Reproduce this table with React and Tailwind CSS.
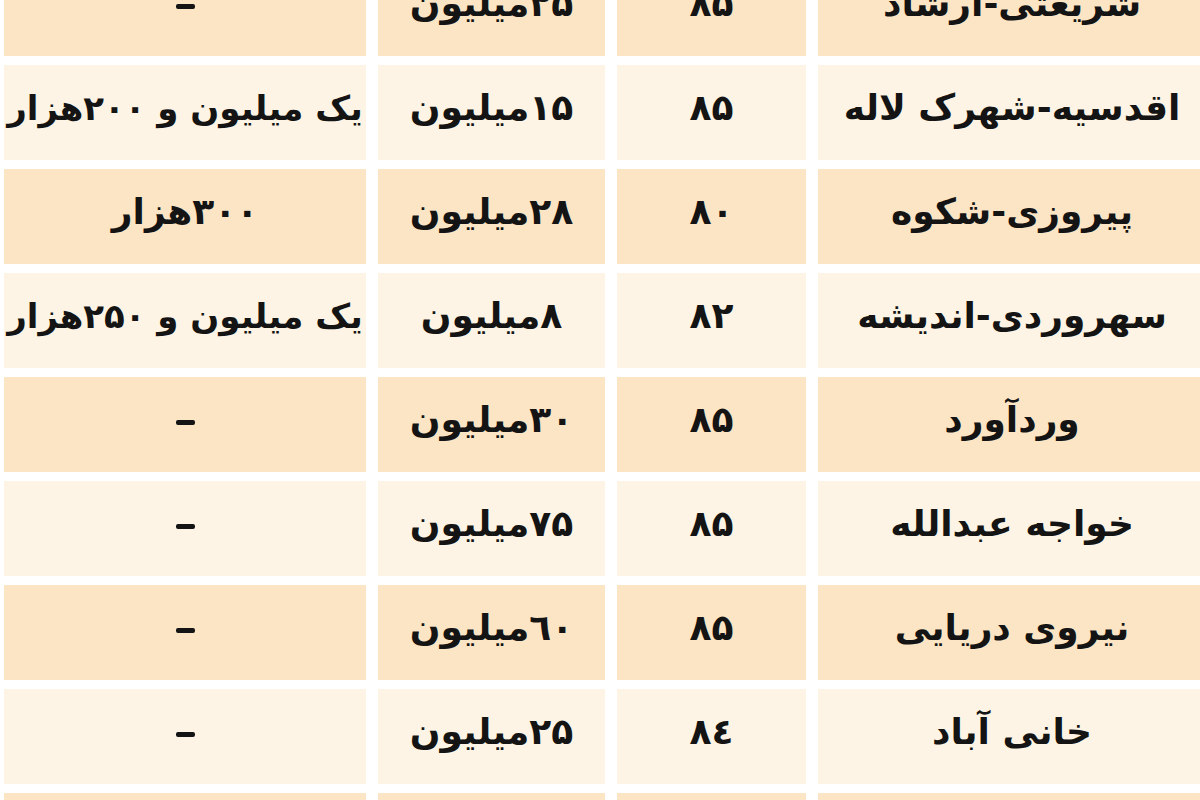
import React from "react";

const rows = [
  ["شریعتی-ارشاد", "۸۵", "۲۵میلیون", "–"],
  ["اقدسیه-شهرک لاله", "۸۵", "۱۵میلیون", "یک میلیون و ۲۰۰هزار"],
  ["پیروزی-شکوه", "۸۰", "۲۸میلیون", "۳۰۰هزار"],
  ["سهروردی-اندیشه", "۸۲", "۸میلیون", "یک میلیون و ۲۵۰هزار"],
  ["وردآورد", "۸۵", "۳۰میلیون", "–"],
  ["خواجه عبدالله", "۸۵", "۷۵میلیون", "–"],
  ["نیروی دریایی", "۸۵", "٦۰میلیون", "–"],
  ["خانی آباد", "۸٤", "۲۵میلیون", "–"],
  ["", "", "", ""],
];

export default function App() {
  return (
    <div className="w-[1200px] h-[800px] overflow-hidden bg-white">
      <div
        dir="rtl"
        className="-mt-[39px] -mr-[6px] flex flex-col gap-[9px] text-[#141414] font-bold"
        style={{ fontFamily: '"DejaVu Sans", sans-serif' }}
      >
        {rows.map((r, i) => (
          <div
            key={i}
            className="grid grid-cols-[388px_189px_227px_362px] gap-x-[12px] h-[95px]"
          >
            {r.map((c, j) => (
              <div
                key={j}
                className={`flex items-center justify-center whitespace-nowrap pb-[9px] ${
                  j === 3 && c.length > 10 ? "text-[34px]" : "text-[36px]"
                } ${i % 2 === 0 ? "bg-[#fce5c4]" : "bg-[#fdf4e5]"}`}
              >
                {c === "–" ? (
                  <span className="block w-[19px] h-[5px] rounded-[2px] bg-[#141414] mt-[4px]" />
                ) : (
                  c
                )}
              </div>
            ))}
          </div>
        ))}
      </div>
    </div>
  );
}
